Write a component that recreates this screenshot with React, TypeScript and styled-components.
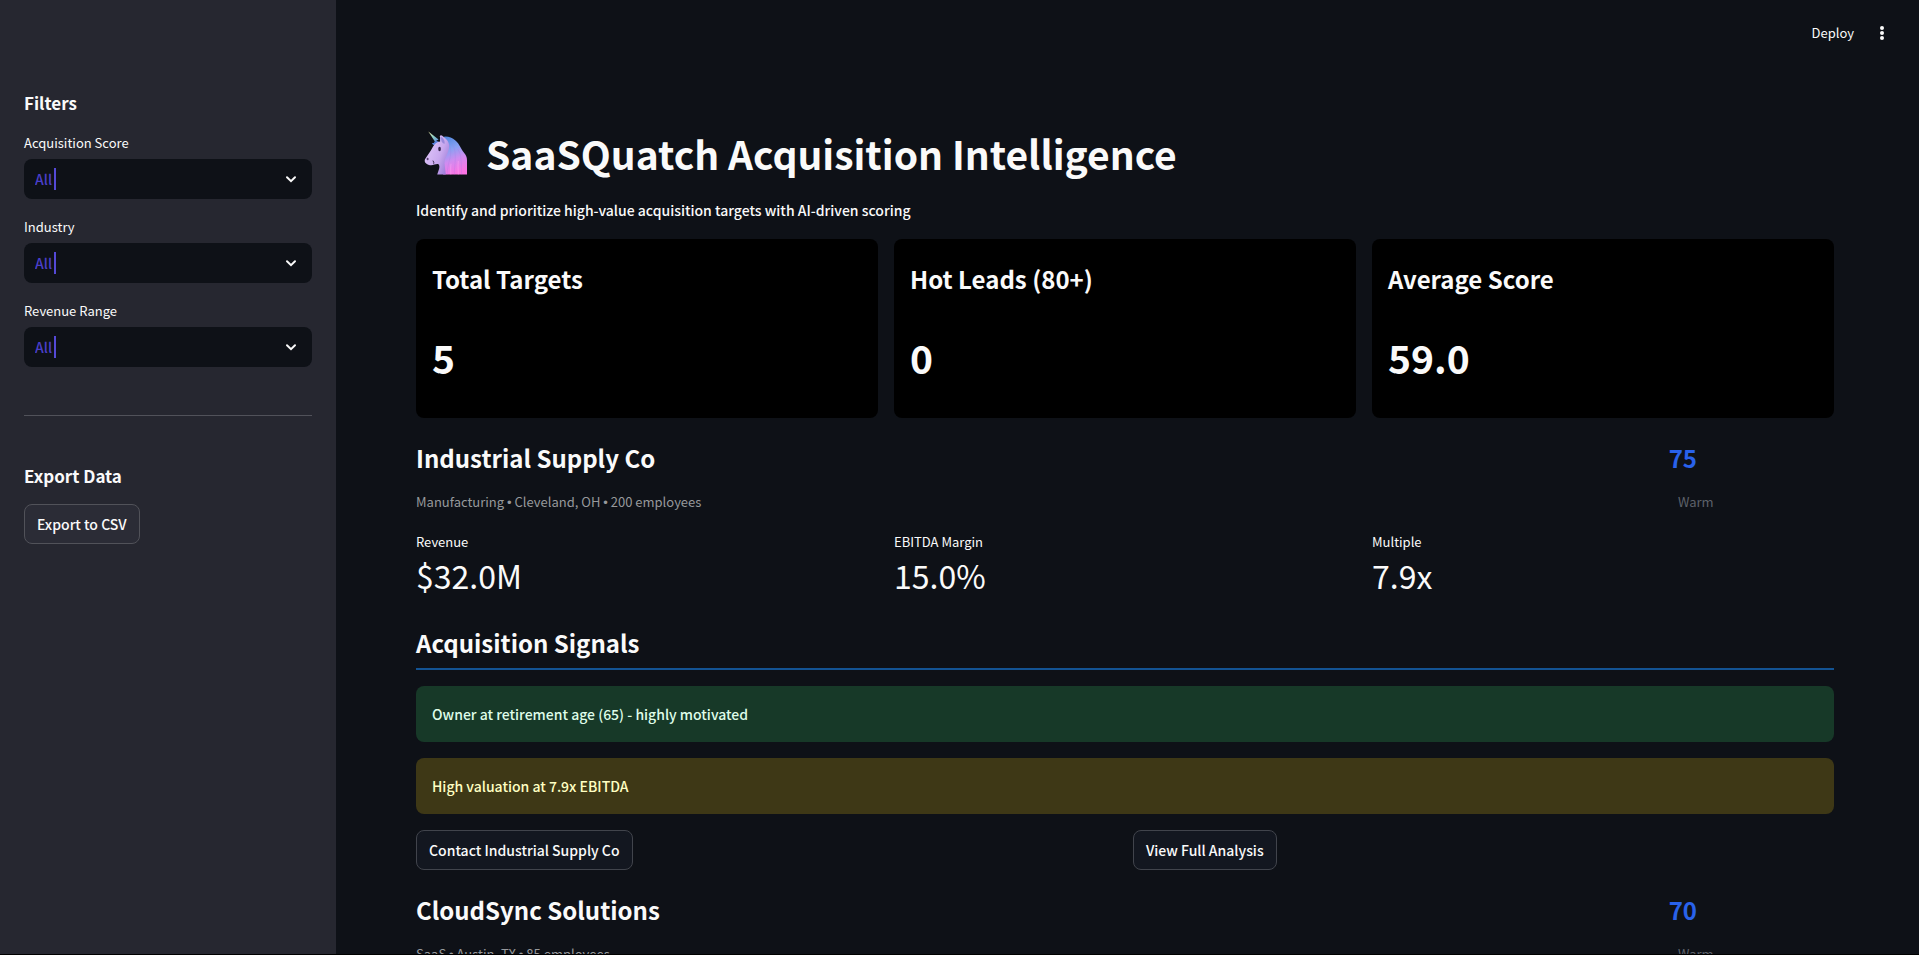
import React, { Fragment, useState } from "react";
import styled, { createGlobalStyle, css } from "styled-components";

const Global = createGlobalStyle`
  * { box-sizing: border-box; }
  body { margin: 0; background: #0e1117; }
  h1, h2, h3, p, dl, dt, dd { margin: 0; }
  body, button, select {
    font-family: "Noto Sans CJK SC", "Noto Sans", sans-serif;
    color: #fafafa;
  }
`;

const headingText = css`
  font-size: 24px;
  line-height: 36px;
  font-weight: 600;
`;

const bodyText = css`
  font-size: 14px;
  line-height: 26px;
  font-weight: 500;
`;

const smallText = css`
  font-size: 13px;
  line-height: 20px;
`;

const Shell = styled.div`
  display: flex;
  height: 100vh;
  overflow: hidden;
  border-bottom: 1px solid #000;
`;

const Sidebar = styled.aside`
  flex: 0 0 336px;
  padding: 91px 24px 24px;
  background: #262730;
  overflow-y: auto;
  scrollbar-width: none;
`;

const SidebarHeading = styled.h2`
  font-size: 17px;
  line-height: 24px;
  font-weight: 600;
`;

const FilterList = styled.div`
  display: flex;
  flex-direction: column;
  gap: 18px;
  margin-top: 18px;
`;

const Field = styled.div`
  display: flex;
  flex-direction: column;
  gap: 6px;
`;

const FieldLabel = styled.label`
  ${smallText}
`;

const SelectBox = styled.div`
  position: relative;
`;

const Select = styled.select`
  display: block;
  width: 100%;
  height: 40px;
  padding: 0 40px 0 11px;
  border: 0;
  border-radius: 8px;
  outline: none;
  appearance: none;
  background: #0e1117;
  color: #4a3fc9;
  font-size: 14px;
  font-weight: 500;
`;

const Caret = styled.span`
  position: absolute;
  top: 9px;
  left: 30px;
  width: 2px;
  height: 22px;
  background: #5549d6;
  pointer-events: none;
`;

const Chevron = styled.svg`
  position: absolute;
  top: 10px;
  right: 11px;
  width: 20px;
  height: 20px;
  pointer-events: none;
`;

const Divider = styled.hr`
  height: 1px;
  margin: 48px 0;
  border: 0;
  background: #51525a;
`;

const Button = styled.button<{ $raised?: boolean }>`
  ${bodyText}
  height: 40px;
  padding: 0 12px;
  border: 1px solid ${(p) => (p.$raised ? "#515259" : "#41444c")};
  border-radius: 8px;
  background: ${(p) => (p.$raised ? "#2b2c36" : "#131720")};
  white-space: nowrap;
`;

const ExportButton = styled(Button)`
  margin-top: 16px;
`;

const Main = styled.main`
  flex: 1;
  min-width: 0;
  overflow-y: auto;
  scrollbar-width: none;
`;

const Toolbar = styled.header`
  display: flex;
  justify-content: flex-end;
  align-items: center;
  gap: 16px;
  height: 66px;
  padding-right: 25px;
`;

const ToolbarButton = styled.button`
  display: flex;
  align-items: center;
  padding: 0;
  border: 0;
  background: none;
  ${smallText}
`;

const Content = styled.div`
  padding: 61px 85px 80px 80px;
`;

const Title = styled.h1`
  display: flex;
  align-items: center;
  gap: 19px;
  padding-left: 8px;
  font-size: 39px;
  line-height: 52px;
  font-weight: 700;
`;

const Unicorn = styled.svg`
  flex: none;
  width: 43px;
  height: 44px;
`;

const Intro = styled.p`
  ${bodyText}
  margin: 18px 0 16px;
`;

const Columns = styled.div<{ $template: string }>`
  display: grid;
  grid-template-columns: ${(p) => p.$template};
  column-gap: 16px;
`;

const StatCard = styled.section`
  padding: 22px 16px 35px;
  border-radius: 8px;
  background: #000;
`;

const StatTitle = styled.h3`
  ${headingText}
`;

const StatValue = styled.p`
  margin-top: 34px;
  font-size: 39px;
  line-height: 52px;
  font-weight: 700;
`;

const Company = styled.article`
  padding-top: 22px;
`;

const CompanyName = styled.h2`
  ${headingText}
`;

const Meta = styled.p`
  margin-top: 15px;
  font-size: 13px;
  line-height: 22px;
  color: #97999c;
`;

const Bullet = styled.span`
  font-family: "Liberation Sans", sans-serif;
`;

const ScoreColumn = styled.div`
  text-align: center;
`;

const Score = styled.p`
  ${headingText}
  padding-right: 22px;
  font-weight: 700;
  color: #2962eb;
`;

const Rating = styled(Meta)`
  padding-left: 4px;
  color: #5d616a;
`;

const Metrics = styled.dl`
  display: grid;
  grid-template-columns: repeat(3, 1fr);
  column-gap: 16px;
  margin-top: 18px;
`;

const MetricLabel = styled.dt`
  ${smallText}
`;

const MetricValue = styled.dd`
  font-size: 32px;
  line-height: 46px;
`;

const SignalsHeading = styled.h3`
  ${headingText}
  margin-top: 27px;
  padding-bottom: 7px;
  border-bottom: 2px solid #135393;
`;

const Alert = styled.div<{ $kind: "good" | "warn" }>`
  ${bodyText}
  margin: 16px 0;
  padding: 15px 16px;
  border-radius: 8px;
  background: ${(p) => (p.$kind === "good" ? "#173928" : "#3e3816")};
  color: ${(p) => (p.$kind === "good" ? "#dffde9" : "#ffffc2")};
`;

type Signal = { kind: "good" | "warn"; text: string };
type CompanyData = {
  name: string;
  facts: string[];
  score: number;
  rating: string;
  metrics: [string, string][];
  signals: Signal[];
};

const filters = ["Acquisition Score", "Industry", "Revenue Range"];

const stats = [
  ["Total Targets", "5"],
  ["Hot Leads (80+)", "0"],
  ["Average Score", "59.0"],
];

const companies: CompanyData[] = [
  {
    name: "Industrial Supply Co",
    facts: ["Manufacturing", "Cleveland, OH", "200 employees"],
    score: 75,
    rating: "Warm",
    metrics: [
      ["Revenue", "$32.0M"],
      ["EBITDA Margin", "15.0%"],
      ["Multiple", "7.9x"],
    ],
    signals: [
      { kind: "good", text: "Owner at retirement age (65) - highly motivated" },
      { kind: "warn", text: "High valuation at 7.9x EBITDA" },
    ],
  },
  {
    name: "CloudSync Solutions",
    facts: ["SaaS", "Austin, TX", "85 employees"],
    score: 70,
    rating: "Warm",
    metrics: [],
    signals: [],
  },
];

function FilterSelect({ label }: { label: string }) {
  const [value, setValue] = useState("All");
  const id = label.toLowerCase().replace(/ /g, "-");
  return (
    <Field>
      <FieldLabel htmlFor={id}>{label}</FieldLabel>
      <SelectBox>
        <Select id={id} value={value} onChange={(e) => setValue(e.target.value)}>
          <option>All</option>
        </Select>
        <Caret />
        <Chevron viewBox="0 0 20 20" aria-hidden="true">
          <path d="M6 8.3l4 3.8 4-3.8" fill="none" stroke="#fafafa" strokeWidth="2" strokeLinecap="round" />
        </Chevron>
      </SelectBox>
    </Field>
  );
}

function UnicornIcon() {
  return (
    <Unicorn viewBox="42 52 130 132" role="img" aria-label="Unicorn">
      <defs>
        <linearGradient id="mane" x1="0.2" y1="0" x2="0.5" y2="1">
          <stop offset="0" stopColor="#4f86dd" />
          <stop offset="0.35" stopColor="#86a2f2" />
          <stop offset="0.65" stopColor="#cf8cf0" />
          <stop offset="1" stopColor="#fb74e4" />
        </linearGradient>
        <linearGradient id="face" x1="0" y1="0.2" x2="1" y2="0.8">
          <stop offset="0" stopColor="#e0c8fa" />
          <stop offset="0.6" stopColor="#c9a9ee" />
          <stop offset="1" stopColor="#9a78d8" />
        </linearGradient>
        <linearGradient id="horn" x1="0" y1="0" x2="1" y2="1">
          <stop offset="0" stopColor="#f2e9a0" />
          <stop offset="0.5" stopColor="#8fd0c4" />
          <stop offset="1" stopColor="#5a8be0" />
        </linearGradient>
      </defs>
      <path d="M90 76C97 64 122 66 137 80C151 92 153 106 163 117C169 124 172 130 172 140V183H100Z" fill="url(#mane)" />
      <path d="M55 53L86 77L75 83Z" fill="url(#horn)" />
      <path d="M78 80C70 84 76 89 66 88C69 95 75 97 80 97L91 86Z" fill="#5a82dd" />
      <path d="M91 72C87 64 94 62 99 67C105 74 116 77 118 94C120 114 105 129 104 148L108 183H82C86 170 92 160 86 152C78 149 71 157 57 154C47 151 42 145 45 137C54 123 62 113 69 99C73 91 81 84 91 83Z" fill="url(#face)" />
      <path d="M94 69C102 75 106 82 104 91C96 88 92 80 94 69Z" fill="#9a88dc" />
      <ellipse cx="89" cy="106" rx="4" ry="7" fill="#34244d" />
      <ellipse cx="53" cy="136" rx="3" ry="4" fill="#584075" />
      <path d="M69 141C73 149 73 149 70 151" fill="none" stroke="#433058" strokeWidth="3" />
      <path d="M118 92C132 120 112 145 112 183M128 92C145 120 132 155 134 183M144 107C158 125 153 153 156 183" fill="none" stroke="#a07be4" strokeOpacity="0.25" strokeWidth="3" />
      <path d="M124 150C121 160 123 174 123 183M146 142C143 160 146 172 146 183" fill="none" stroke="#ffa6f3" strokeOpacity="0.4" strokeWidth="4" />
    </Unicorn>
  );
}

function CompanyCard({ company }: { company: CompanyData }) {
  return (
    <Company>
      <Columns $template="4fr 1fr">
        <div>
          <CompanyName>{company.name}</CompanyName>
          <Meta>
            {company.facts.map((fact, i) => (
              <Fragment key={fact}>
                {i > 0 && <> <Bullet>•</Bullet> </>}
                {fact}
              </Fragment>
            ))}
          </Meta>
        </div>
        <ScoreColumn>
          <Score>{company.score}</Score>
          <Rating>{company.rating}</Rating>
        </ScoreColumn>
      </Columns>
      {company.metrics.length > 0 && (
        <Metrics>
          {company.metrics.map(([label, value]) => (
            <div key={label}>
              <MetricLabel>{label}</MetricLabel>
              <MetricValue>{value}</MetricValue>
            </div>
          ))}
        </Metrics>
      )}
      {company.signals.length > 0 && (
        <>
          <SignalsHeading>Acquisition Signals</SignalsHeading>
          {company.signals.map((s) => (
            <Alert key={s.text} $kind={s.kind}>
              {s.text}
            </Alert>
          ))}
          <Columns $template="1fr 1fr">
            <div>
              <Button>Contact {company.name}</Button>
            </div>
            <div>
              <Button>View Full Analysis</Button>
            </div>
          </Columns>
        </>
      )}
    </Company>
  );
}

export default function App() {
  return (
    <Shell>
      <Global />
      <Sidebar>
        <SidebarHeading>Filters</SidebarHeading>
        <FilterList>
          {filters.map((label) => (
            <FilterSelect key={label} label={label} />
          ))}
        </FilterList>
        <Divider />
        <SidebarHeading>Export Data</SidebarHeading>
        <ExportButton $raised>Export to CSV</ExportButton>
      </Sidebar>
      <Main>
        <Toolbar>
          <ToolbarButton>Deploy</ToolbarButton>
          <ToolbarButton aria-label="Menu">
            <svg width="24" height="20" viewBox="0 0 24 20" fill="#fafafa">
              <circle cx="12" cy="5" r="2" />
              <circle cx="12" cy="10" r="2" />
              <circle cx="12" cy="15" r="2" />
            </svg>
          </ToolbarButton>
        </Toolbar>
        <Content>
          <Title>
            <UnicornIcon />
            SaaSQuatch Acquisition Intelligence
          </Title>
          <Intro>Identify and prioritize high-value acquisition targets with AI-driven scoring</Intro>
          <Columns $template="repeat(3, 1fr)">
            {stats.map(([label, value]) => (
              <StatCard key={label}>
                <StatTitle>{label}</StatTitle>
                <StatValue>{value}</StatValue>
              </StatCard>
            ))}
          </Columns>
          {companies.map((c) => (
            <CompanyCard key={c.name} company={c} />
          ))}
        </Content>
      </Main>
    </Shell>
  );
}
